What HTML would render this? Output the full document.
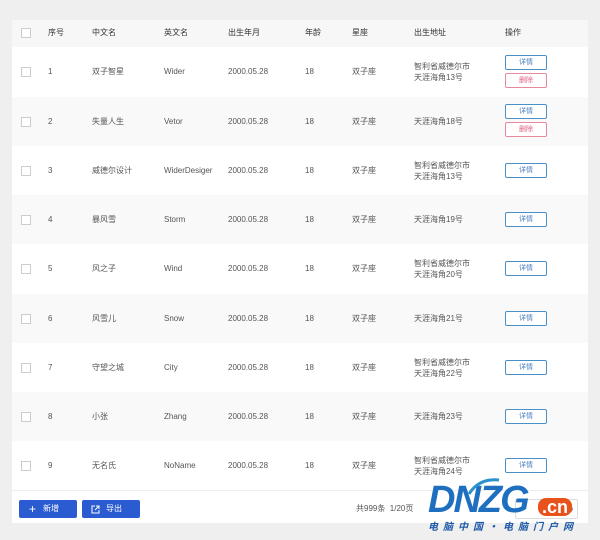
<!DOCTYPE html>
<html><head><meta charset="utf-8"><style>
*{margin:0;padding:0;box-sizing:border-box}
body{width:600px;height:540px;background:#efefef;font-family:"Liberation Sans","Noto Sans CJK SC",sans-serif;font-size:8px;color:#555;position:relative;overflow:hidden}
.card{position:absolute;left:12px;top:20px;width:576px;height:503px;background:#fff}
.hdr{position:absolute;left:0;top:0;width:576px;height:27px;background:#f7f7f7;color:#333}
.row{position:absolute;left:0;width:576px;height:49px}
.row.g{background:#f9f9f9}
.c{position:absolute;white-space:nowrap;line-height:10px}
.c2{line-height:11px!important}
.cb{position:absolute;left:9px;width:10px;height:10px;border:1px solid #ccc;background:#fff}
.btn{position:absolute;left:493px;width:42px;height:15px;border:1px solid #4a90c8;border-radius:2px;color:#4a7fc0;font-size:7px;text-align:center;line-height:13px;background:#fff}
.btn.r{border-color:#e58a9a;color:#e06080}
.foot{position:absolute;left:0;top:470px;width:576px;height:33px;border-top:1px solid #eee}
.pb{position:absolute;top:9px;width:58px;height:18px;background:#2a5bd0;border-radius:2px;color:#fff;font-size:8px;line-height:18px}
</style></head><body>
<div class="card">
<div class="hdr">
<div class="cb" style="top:8px"></div>
<span class="c" style="left:36px;top:8px">序号</span>
<span class="c" style="left:80px;top:8px">中文名</span>
<span class="c" style="left:152px;top:8px">英文名</span>
<span class="c" style="left:216px;top:8px">出生年月</span>
<span class="c" style="left:293px;top:8px">年龄</span>
<span class="c" style="left:340px;top:8px">星座</span>
<span class="c" style="left:402px;top:8px">出生地址</span>
<span class="c" style="left:493px;top:8px">操作</span>
</div>
<div class="row" style="top:27px">
<div class="cb" style="top:20px"></div><span class="c" style="left:36px;top:20px">1</span><span class="c" style="left:80px;top:20px">双子智星</span><span class="c" style="left:152px;top:20px">Wider</span><span class="c" style="left:216px;top:20px">2000.05.28</span><span class="c" style="left:293px;top:20px">18</span><span class="c" style="left:340px;top:20px">双子座</span><span class="c c2" style="left:402px;top:14px">智利省威德尔市<br>天涯海角13号</span>
<div class="btn" style="top:8px">详情</div><div class="btn r" style="top:26px">删除</div></div>
<div class="row g" style="top:77px">
<div class="cb" style="top:20px"></div><span class="c" style="left:36px;top:20px">2</span><span class="c" style="left:80px;top:20px">失量人生</span><span class="c" style="left:152px;top:20px">Vetor</span><span class="c" style="left:216px;top:20px">2000.05.28</span><span class="c" style="left:293px;top:20px">18</span><span class="c" style="left:340px;top:20px">双子座</span><span class="c" style="left:402px;top:20px">天涯海角18号</span>
<div class="btn" style="top:7px">详情</div><div class="btn r" style="top:25px">删除</div></div>
<div class="row" style="top:126px">
<div class="cb" style="top:20px"></div><span class="c" style="left:36px;top:20px">3</span><span class="c" style="left:80px;top:20px">威德尔设计</span><span class="c" style="left:152px;top:20px">WiderDesiger</span><span class="c" style="left:216px;top:20px">2000.05.28</span><span class="c" style="left:293px;top:20px">18</span><span class="c" style="left:340px;top:20px">双子座</span><span class="c c2" style="left:402px;top:14px">智利省威德尔市<br>天涯海角13号</span>
<div class="btn" style="top:17px">详情</div></div>
<div class="row g" style="top:175px">
<div class="cb" style="top:20px"></div><span class="c" style="left:36px;top:20px">4</span><span class="c" style="left:80px;top:20px">暴风雪</span><span class="c" style="left:152px;top:20px">Storm</span><span class="c" style="left:216px;top:20px">2000.05.28</span><span class="c" style="left:293px;top:20px">18</span><span class="c" style="left:340px;top:20px">双子座</span><span class="c" style="left:402px;top:20px">天涯海角19号</span>
<div class="btn" style="top:17px">详情</div></div>
<div class="row" style="top:224px">
<div class="cb" style="top:20px"></div><span class="c" style="left:36px;top:20px">5</span><span class="c" style="left:80px;top:20px">风之子</span><span class="c" style="left:152px;top:20px">Wind</span><span class="c" style="left:216px;top:20px">2000.05.28</span><span class="c" style="left:293px;top:20px">18</span><span class="c" style="left:340px;top:20px">双子座</span><span class="c c2" style="left:402px;top:14px">智利省威德尔市<br>天涯海角20号</span>
<div class="btn" style="top:17px">详情</div></div>
<div class="row g" style="top:274px">
<div class="cb" style="top:20px"></div><span class="c" style="left:36px;top:20px">6</span><span class="c" style="left:80px;top:20px">风雪儿</span><span class="c" style="left:152px;top:20px">Snow</span><span class="c" style="left:216px;top:20px">2000.05.28</span><span class="c" style="left:293px;top:20px">18</span><span class="c" style="left:340px;top:20px">双子座</span><span class="c" style="left:402px;top:20px">天涯海角21号</span>
<div class="btn" style="top:17px">详情</div></div>
<div class="row" style="top:323px">
<div class="cb" style="top:20px"></div><span class="c" style="left:36px;top:20px">7</span><span class="c" style="left:80px;top:20px">守望之城</span><span class="c" style="left:152px;top:20px">City</span><span class="c" style="left:216px;top:20px">2000.05.28</span><span class="c" style="left:293px;top:20px">18</span><span class="c" style="left:340px;top:20px">双子座</span><span class="c c2" style="left:402px;top:14px">智利省威德尔市<br>天涯海角22号</span>
<div class="btn" style="top:17px">详情</div></div>
<div class="row g" style="top:372px">
<div class="cb" style="top:20px"></div><span class="c" style="left:36px;top:20px">8</span><span class="c" style="left:80px;top:20px">小张</span><span class="c" style="left:152px;top:20px">Zhang</span><span class="c" style="left:216px;top:20px">2000.05.28</span><span class="c" style="left:293px;top:20px">18</span><span class="c" style="left:340px;top:20px">双子座</span><span class="c" style="left:402px;top:20px">天涯海角23号</span>
<div class="btn" style="top:17px">详情</div></div>
<div class="row" style="top:421px">
<div class="cb" style="top:20px"></div><span class="c" style="left:36px;top:20px">9</span><span class="c" style="left:80px;top:20px">无名氏</span><span class="c" style="left:152px;top:20px">NoName</span><span class="c" style="left:216px;top:20px">2000.05.28</span><span class="c" style="left:293px;top:20px">18</span><span class="c" style="left:340px;top:20px">双子座</span><span class="c c2" style="left:402px;top:14px">智利省威德尔市<br>天涯海角24号</span>
<div class="btn" style="top:17px">详情</div></div>
<div class="foot">
<div class="pb" style="left:7px"><span style="position:absolute;left:10px;top:0;font-size:12px">+</span><span style="position:absolute;left:24px">新增</span></div>
<div class="pb" style="left:70px"><svg style="position:absolute;left:9px;top:5px" width="9" height="9" viewBox="0 0 9 9"><path d="M4 1H1V8H8V5M5 1H8V4M8 1L4 5" stroke="#fff" fill="none" stroke-width="1"/></svg><span style="position:absolute;left:24px">导出</span></div>
<span class="c" style="left:344px;top:13px">共999条 &nbsp;1/20页</span>
<div style="position:absolute;left:503px;top:8px;width:63px;height:20px;border:1px solid #ddd;border-radius:2px"><span class="c" style="right:4px;top:5px">GO</span></div>
</div>
</div>
<div style="position:absolute;left:428px;top:480px;width:165px;height:55px">
<span style="position:absolute;left:0;top:0;font:italic bold 38px/40px 'Liberation Sans',sans-serif;color:#1e6fc0;letter-spacing:-2px">DNZG</span>
<span style="position:absolute;left:110px;top:18px;background:#e8531c;color:#fff;font:bold 18px/18px 'Liberation Sans',sans-serif;padding:0 4px;border-radius:8px">.cn</span>
<span style="position:absolute;left:0;top:40px;font:italic bold 10px/12px 'Noto Sans CJK SC',sans-serif;color:#1e5aa8;letter-spacing:5px;white-space:nowrap">电脑中国·电脑门户网</span>
<svg style="position:absolute;left:36px;top:-4px" width="40" height="20"><path d="M5 18 Q15 2 35 4" stroke="#2a90d0" stroke-width="3" fill="none"/></svg>
</div>
</body></html>
